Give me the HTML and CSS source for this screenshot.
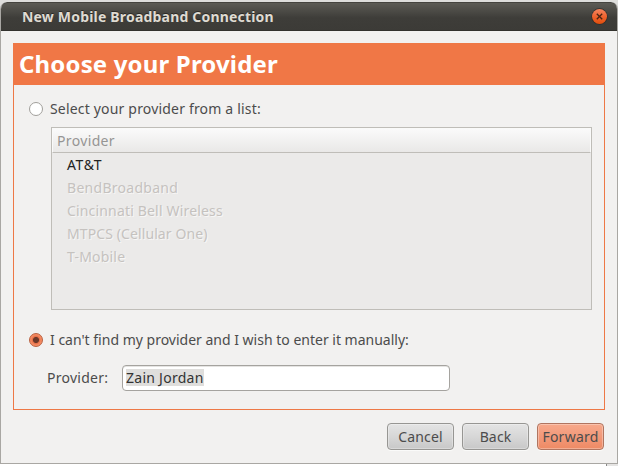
FILE: index.html
```html
<!DOCTYPE html>
<html lang="en">
<head>
<meta charset="utf-8">
<title>New Mobile Broadband Connection</title>
<link rel="stylesheet" href="styles.css">
</head>
<body>
<div class="window">
  <header class="titlebar">
    <span class="title">New Mobile Broadband Connection</span>
    <svg class="close" width="17" height="17" viewBox="0 0 17 17">
      <defs><linearGradient id="g" x1="0" y1="0" x2="0" y2="1"><stop offset="0" stop-color="#f58560"/><stop offset=".5" stop-color="#ef6430"/><stop offset="1" stop-color="#e24e0c"/></linearGradient></defs>
      <circle cx="8.5" cy="8.5" r="8.2" fill="#2f2e2a"/>
      <circle cx="8.5" cy="8.5" r="7.5" fill="url(#g)"/>
      <path d="M5.8 5.8l5.4 5.4M11.2 5.8l-5.4 5.4" stroke="#4a2413" stroke-width="1.3"/>
    </svg>
  </header>
  <main class="page">
    <h1 class="heading"><span>Choose your Provider</span></h1>
    <div class="content">
      <label class="option"><i class="radio"></i><span class="t-select">Select your provider from a list:</span></label>
      <div class="list">
        <div class="list-head"><span class="t-head">Provider</span></div>
        <ul class="rows">
          <li class="active"><span class="t-att">AT&amp;T</span></li>
          <li><span class="t-bend">BendBroadband</span></li>
          <li><span class="t-cin">Cincinnati Bell Wireless</span></li>
          <li><span class="t-mtpcs">MTPCS (Cellular One)</span></li>
          <li><span class="t-tmo">T-Mobile</span></li>
        </ul>
      </div>
      <label class="option manual"><i class="radio on"></i><span class="t-manual">I can't find my provider and I wish to enter it manually:</span></label>
      <div class="field">
        <span class="field-label">Provider:</span>
        <div class="entry"><span class="selection">Zain Jordan</span></div>
      </div>
    </div>
  </main>
  <footer class="actions">
    <button class="btn"><span class="t-cancel">Cancel</span></button>
    <button class="btn"><span class="t-back">Back</span></button>
    <button class="btn primary"><span class="t-forward">Forward</span></button>
  </footer>
</div>
<div class="behind"></div>
</body>
</html>
```
FILE: styles.css
```css
* { box-sizing: border-box; }
body {
  margin: 0;
  width: 618px;
  height: 466px;
  padding-top: 2px;
  overflow: hidden;
  background: linear-gradient(#dededc 0 12px, #fff 12px);
  color: #4c4c4c;
  font: 14px/20px "Noto Sans", "Open Sans", sans-serif;
  white-space: nowrap;
}
.window {
  width: 618px;
  height: 462px;
  border: 1px solid #a9a7a3;
  border-top: 0;
  border-radius: 7px 7px 0 0;
  background: #f2f1f0;
  overflow: hidden;
}
.titlebar {
  height: 29px;
  margin: 0 -1px;
  padding: 0 11px 0 22px;
  display: flex;
  align-items: center;
  justify-content: space-between;
  background: linear-gradient(#5c5b55, #3e3d39 55%, #3c3b37);
  border-top: 1px solid #45443f;
  border-bottom: 1px solid #33322e;
  border-radius: 7px 7px 0 0;
  color: #dfdbd2;
  font-weight: bold;
}
.title { text-shadow: 0 -1px #2b2a27; letter-spacing: .19px; }
.close { display: block; margin-right: -1px; }
.page {
  width: 592px;
  height: 367px;
  margin: 12px 0 0 12px;
  border: 1px solid #ee7846;
}
.heading {
  margin: 0;
  height: 41px;
  padding-left: 5px;
  background: #f07746;
  color: #fff;
  font-size: 24px;
  line-height: 39px;
  letter-spacing: .16px;
}
.content { padding: 14px 12px 0 15px; }
.option { display: flex; align-items: center; height: 20px; gap: 7px; }
.radio {
  width: 14px;
  height: 14px;
  border-radius: 50%;
  border: 1px solid #a19f9b;
  background: #fff;
}
.radio.on {
  border-color: #b9603f;
  background: radial-gradient(circle, #6b3829 0 2.6px, #e56f48 3.5px, #f58b62 5px);
}
.t-select { letter-spacing: .18px; }
.list {
  height: 183px;
  margin: 8px 0 0 22px;
  border: 1px solid #bfbdb8;
  background: #ebeae9;
}
.list-head {
  height: 25px;
  padding: 2px 4px;
  border: 1px solid #fafaf9;
  border-bottom: 1px solid #bfbdb8;
  background: linear-gradient(#fafafa, #e9e8e7);
  color: #969594;
}
.t-head { letter-spacing: .35px; }
.rows { list-style: none; margin: 0; padding: 0 0 0 15px; }
.rows li { height: 23px; line-height: 23px; color: #c5c2bf; text-shadow: 1px 1px #f7f6f5; }
.rows .active { color: #222; text-shadow: none; }
.t-att { letter-spacing: .6px; }
.t-bend { letter-spacing: .28px; }
.t-cin { letter-spacing: .17px; }
.t-mtpcs { letter-spacing: .1px; }
.t-tmo { letter-spacing: .2px; }
.manual { margin-top: 20px; }
.field { display: flex; align-items: center; margin: 15px 0 0 18px; }
.field-label { width: 75px; letter-spacing: .27px; }
.entry {
  width: 328px;
  height: 26px;
  padding: 3px;
  border: 1px solid #a5a39f;
  border-radius: 4px;
  background: #fff;
  box-shadow: inset 0 1px #e5e4e2;
  color: #333;
  line-height: 17px;
}
.selection { display: inline-block; width: 78px; height: 17px; letter-spacing: .27px; background: #dfdedc; }
.actions { display: flex; justify-content: flex-end; gap: 8px; margin: 13px 13px 0 0; }
.btn {
  width: 67px;
  height: 27px;
  padding: 0;
  border: 1px solid #979693;
  border-radius: 4px;
  background: linear-gradient(#e4e4e4, #d7d7d7 50%, #c8c8c8);
  box-shadow: inset 0 0 0 1px rgba(255,255,255,.3), 0 1px #fafaf9;
  color: #4c4c4c;
  font: inherit;
}
.btn.primary {
  border-color: #b07560;
  background: linear-gradient(#f7a98b, #f2997a 50%, #ee8a64);
}
.t-cancel, .t-back { letter-spacing: .15px; }
.t-forward { letter-spacing: .25px; }
.behind { width: 12px; height: 2px; margin-left: 606px; border-left: 1px solid #888; background: #e5e4e3; }
```
